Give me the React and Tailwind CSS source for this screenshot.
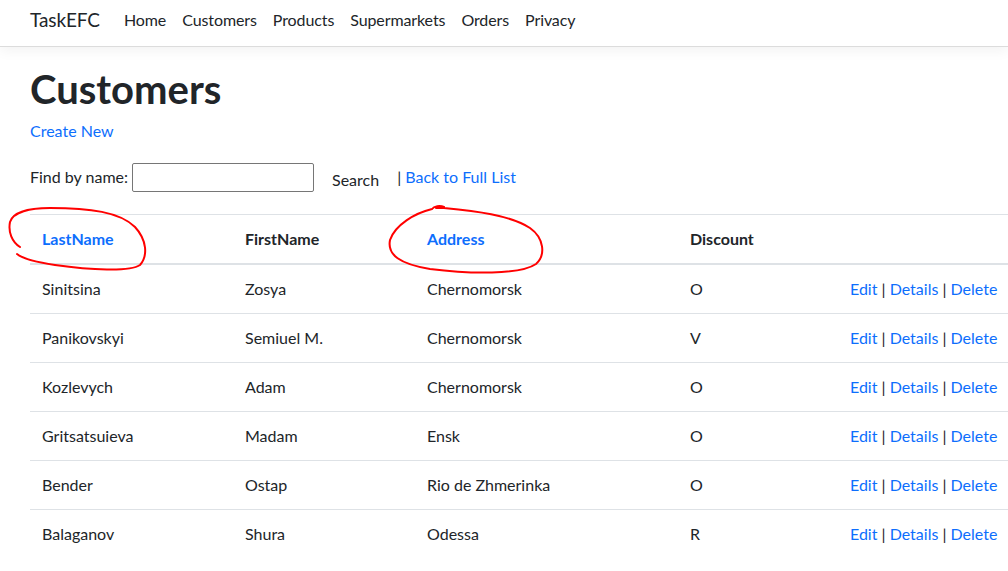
import React from "react";

const rows = [
  ["Sinitsina", "Zosya", "Chernomorsk", "O"],
  ["Panikovskyi", "Semiuel M.", "Chernomorsk", "V"],
  ["Kozlevych", "Adam", "Chernomorsk", "O"],
  ["Gritsatsuieva", "Madam", "Ensk", "O"],
  ["Bender", "Ostap", "Rio de Zhmerinka", "O"],
  ["Balaganov", "Shura", "Odessa", "R"],
];

const navLinks = ["Home", "Customers", "Products", "Supermarkets", "Orders", "Privacy"];

export default function App() {
  return (
    <div
      className="relative w-[1008px] h-[571px] overflow-hidden bg-white text-[#212529] text-[16px] leading-[24px]"
      style={{ fontFamily: "Lato, 'Liberation Sans', sans-serif" }}
    >
      <nav className="h-[47px] pb-[6px] border-b border-[#dcdcdc] shadow-[0_4px_12px_rgba(0,0,0,0.05)] flex items-center px-[30px]">
        <span className="text-[19px] leading-[30px] text-[#212529] mr-[16px] tracking-[-0.1px]">TaskEFC</span>
        <div className="flex">
          {navLinks.map((l) => (
            <span key={l} className="px-[8px] text-[#212529] tracking-[-0.1px]">{l}</span>
          ))}
        </div>
      </nav>

      <main className="px-[30px] pt-[18px]">
        <h1 className="text-[40px] leading-[48px] font-bold mb-[6px]">Customers</h1>
        <p className="mb-[15px]">
          <a className="text-[#0d6efd]">Create New</a>
        </p>
        <form className="flex items-center h-[38px]">
          <span>Find by name:</span>
          <input
            type="text"
            className="ml-[4px] w-[182px] h-[29px] border border-[#767676] rounded-[2px]"
          />
          <button type="button" className="ml-[6px] px-[12px] py-[6px] mt-[6px] text-[#212529]">Search</button>
          <span className="ml-[6px]">|&nbsp;</span>
          <a className="text-[#0d6efd]">Back to Full List</a>
        </form>

        <table className="mt-[18px] w-[978px] border-collapse table-fixed">
          <colgroup>
            <col className="w-[203px]" />
            <col className="w-[182px]" />
            <col className="w-[263px]" />
            <col className="w-[160px]" />
            <col className="w-[170px]" />
          </colgroup>
          <thead>
            <tr className="border-t border-[#dee2e6] border-b-2 border-b-[#dee2e6]">
              <th className="text-left font-bold p-[12px] text-[#0d6efd]">LastName</th>
              <th className="text-left font-bold p-[12px]">FirstName</th>
              <th className="text-left font-bold p-[12px] text-[#0d6efd]">Address</th>
              <th className="text-left font-bold p-[12px]">Discount</th>
              <th className="p-[12px]"></th>
            </tr>
          </thead>
          <tbody>
            {rows.map((r, i) => (
              <tr key={i} className={i < rows.length - 1 ? "border-b border-[#dee2e6]" : ""}>
                <td className="p-[12px]">{r[0]}</td>
                <td className="p-[12px]">{r[1]}</td>
                <td className="p-[12px]">{r[2]}</td>
                <td className="p-[12px]">{r[3]}</td>
                <td className="p-[12px] whitespace-nowrap">
                  <a className="text-[#0d6efd]">Edit</a> | <a className="text-[#0d6efd]">Details</a> |{" "}
                  <a className="text-[#0d6efd]">Delete</a>
                </td>
              </tr>
            ))}
          </tbody>
        </table>
      </main>

      <svg className="absolute left-0 top-0 pointer-events-none" width="1008" height="571" fill="none">
        <path
          d="M20,247 C12,242 8,232 10,222 C13,212 30,208 50,208 C90,208 120,212 135,227 C147,240 148,256 140,265 C130,272 90,270 55,265 C35,262 22,258 17,254"
          stroke="#ff0000"
          strokeWidth="2"
          strokeLinecap="round"
        />
        <path
          d="M444,207 C440,205 434,206 432,209 C415,213 395,225 390,240 C387,255 400,264 430,269 C470,274 520,275 536,264 C546,255 544,238 530,228 C510,215 475,211 444,208 L436,208"
          stroke="#ff0000"
          strokeWidth="2"
          strokeLinecap="round"
        />
      </svg>
    </div>
  );
}
